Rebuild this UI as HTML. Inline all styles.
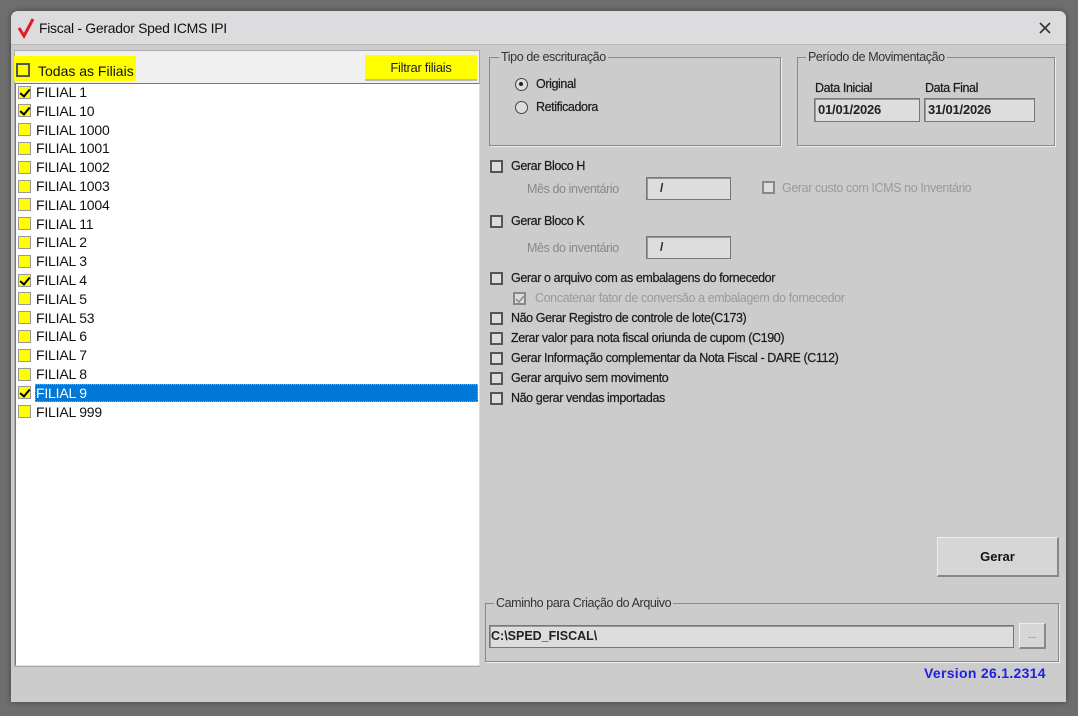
<!DOCTYPE html>
<html><head><meta charset="utf-8"><style>
*{box-sizing:border-box;margin:0;padding:0}
body{width:1078px;height:716px;background:#6e6e6e;position:relative;overflow:hidden;font-family:"Liberation Sans",sans-serif;font-size:12px;color:#222}
.a{position:absolute}
#win{left:11px;top:11px;width:1055px;height:691px;background:#cccccc;border-radius:7px 7px 0 0;box-shadow:0 0 6px rgba(0,0,0,.4)}
#title{left:0;top:0;width:1055px;height:34px;background:#dcdcdf;border-radius:7px 7px 0 0;border-bottom:1px solid #b8b8b8}
.cb{position:absolute;width:13px;height:13px;border:2px solid #555;background:#ddd}
.ycb{position:absolute;width:13px;height:13px;border:1px solid #999;background:#ffff00}
.ycb.c::after{content:"";position:absolute;left:3px;top:0px;width:4px;height:8px;border:solid #000;border-width:0 2.5px 2.5px 0;transform:rotate(40deg)}
.it{position:absolute;left:36px;font-size:14px;color:#111;letter-spacing:-.2px}
.gb{position:absolute;border:1px solid #888;box-shadow:1px 1px 0 #eee}
.lg{position:absolute;background:#cccccc;padding:0 2px;color:#333;font-size:12.5px;letter-spacing:-.4px}
.tx{letter-spacing:-.4px;font-size:12.5px;color:#1a1a1a;-webkit-text-stroke:.2px #1a1a1a}
.inp{position:absolute;background:#ddd;border:1px solid #777;box-shadow:inset 1px 1px 0 #999}
.gray{color:#9a9a9a;-webkit-text-stroke:0}
</style></head><body>
<div id="win" class="a">
 <div id="title" class="a">
  <svg class="a" style="left:6px;top:6px" width="18" height="22" viewBox="0 0 18 22"><path d="M2 11 L7 19 L16 2" stroke="#e21b24" stroke-width="3" fill="none"/></svg>
  <div class="a" style="left:28px;top:9px;font-size:14px;color:#111;letter-spacing:-.3px">Fiscal - Gerador Sped ICMS IPI</div>
  <svg class="a" style="left:1027px;top:10px" width="14" height="14" viewBox="0 0 14 14"><path d="M2 2L12 12M12 2L2 12" stroke="#333" stroke-width="1.6"/></svg>
 </div>
</div>
<div class="a" style="left:14px;top:50px;width:466px;height:617px;background:#f0f0f0;border:1px solid #aaa"></div>
<div class="a" style="left:14px;top:56px;width:122px;height:25px;background:#ffff00"></div>
<div class="a" style="left:16px;top:63px;width:14px;height:14px;border:2px solid #555;background:#ffff00"></div>
<div class="a" style="left:38px;top:63px;font-size:14px;color:#111">Todas as Filiais</div>
<div class="a" style="left:365px;top:55px;width:112px;height:26px;background:#ffff00;border-bottom:2px solid #bbb;text-align:center;line-height:26px;font-size:13px;letter-spacing:-.3px">Filtrar filiais</div>
<div class="a" style="left:15px;top:83px;width:465px;height:583px;background:#fff;border:1px solid #777;border-right-color:#ddd;border-bottom-color:#ddd"></div>
<div class="a" style="left:35px;top:384px;width:443px;height:18px;background:#0078d7;border:1px dotted #e8903a"></div>
<div id="list"></div>
<div class="gb" style="left:489px;top:57px;width:292px;height:89px"></div>
<div class="lg" style="left:499px;top:50px">Tipo de escrituração</div>
<div class="a" style="left:515px;top:78px;width:13px;height:13px;border:1.5px solid #444;border-radius:50%;background:#ddd"><div class="a" style="left:3px;top:3px;width:4px;height:4px;background:#222;border-radius:50%"></div></div>
<div class="a tx" style="left:536px;top:77px">Original</div>
<div class="a" style="left:515px;top:101px;width:13px;height:13px;border:1.5px solid #444;border-radius:50%;background:#ddd"></div>
<div class="a tx" style="left:536px;top:100px">Retificadora</div>
<div class="gb" style="left:797px;top:57px;width:258px;height:89px"></div>
<div class="lg" style="left:806px;top:50px">Período de Movimentação</div>
<div class="a tx" style="left:815px;top:81px">Data Inicial</div>
<div class="a tx" style="left:925px;top:81px">Data Final</div>
<div class="inp" style="left:814px;top:98px;width:106px;height:24px"></div>
<div class="a" style="left:818px;top:102px;font-weight:bold;font-size:13px;letter-spacing:-.2px">01/01/2026</div>
<div class="inp" style="left:924px;top:98px;width:111px;height:24px"></div>
<div class="a" style="left:928px;top:102px;font-weight:bold;font-size:13px;letter-spacing:-.2px">31/01/2026</div>

<div class="cb" style="left:490px;top:160px"></div><div class="a tx" style="left:511px;top:159px">Gerar Bloco H</div>
<div class="a tx gray" style="left:527px;top:182px;color:#888">Mês do inventário</div>
<div class="inp" style="left:646px;top:177px;width:85px;height:23px"></div><div class="a" style="left:660px;top:181px;font-weight:bold">/</div>
<div class="cb" style="left:762px;top:181px;border-color:#888"></div><div class="a tx gray" style="left:782px;top:181px">Gerar custo com ICMS no Inventário</div>
<div class="cb" style="left:490px;top:215px"></div><div class="a tx" style="left:511px;top:214px">Gerar Bloco K</div>
<div class="a tx gray" style="left:527px;top:241px;color:#888">Mês do inventário</div>
<div class="inp" style="left:646px;top:236px;width:85px;height:23px"></div><div class="a" style="left:660px;top:240px;font-weight:bold">/</div>
<div class="cb" style="left:490px;top:272px"></div><div class="a tx" style="left:511px;top:271px">Gerar o arquivo com as embalagens do fornecedor</div>
<div class="cb" style="left:513px;top:292px;border-color:#888"><svg class="a" style="left:0;top:0" width="10" height="10"><path d="M1 5L4 8L9 2" stroke="#888" stroke-width="1.5" fill="none"/></svg></div><div class="a tx gray" style="left:535px;top:291px">Concatenar fator de conversão a embalagem do fornecedor</div>
<div class="cb" style="left:490px;top:312px"></div><div class="a tx" style="left:511px;top:311px">Não Gerar Registro de controle de lote(C173)</div>
<div class="cb" style="left:490px;top:332px"></div><div class="a tx" style="left:511px;top:331px">Zerar valor para nota fiscal oriunda de cupom (C190)</div>
<div class="cb" style="left:490px;top:352px"></div><div class="a tx" style="left:511px;top:351px">Gerar Informação complementar da Nota Fiscal - DARE (C112)</div>
<div class="cb" style="left:490px;top:372px"></div><div class="a tx" style="left:511px;top:371px">Gerar arquivo sem movimento</div>
<div class="cb" style="left:490px;top:392px"></div><div class="a tx" style="left:511px;top:391px">Não gerar vendas importadas</div>

<div class="a" style="left:937px;top:537px;width:122px;height:40px;background:#d6d6d6;border:1px solid #eee;border-right:2px solid #888;border-bottom:2px solid #888;text-align:center;line-height:37px;font-weight:bold;font-size:13px;color:#111">Gerar</div>
<div class="gb" style="left:485px;top:603px;width:574px;height:59px"></div>
<div class="lg" style="left:494px;top:596px">Caminho para Criação do Arquivo</div>
<div class="inp" style="left:489px;top:625px;width:525px;height:23px"></div>
<div class="a" style="left:491px;top:629px;font-weight:bold;font-size:12.5px">C:\SPED_FISCAL\</div>
<div class="a" style="left:1019px;top:623px;width:27px;height:26px;background:#d6d6d6;border:1px solid #eee;border-right:2px solid #888;border-bottom:2px solid #888;text-align:center;line-height:24px;color:#666;font-size:10px">...</div>
<div class="a" style="left:924px;top:665px;color:#2020e0;font-weight:bold;font-size:14px;letter-spacing:.3px">Version 26.1.2314</div>
<script>
var items=[["FILIAL 1",1],["FILIAL 10",1],["FILIAL 1000",0],["FILIAL 1001",0],["FILIAL 1002",0],["FILIAL 1003",0],["FILIAL 1004",0],["FILIAL 11",0],["FILIAL 2",0],["FILIAL 3",0],["FILIAL 4",1],["FILIAL 5",0],["FILIAL 53",0],["FILIAL 6",0],["FILIAL 7",0],["FILIAL 8",0],["FILIAL 9",1],["FILIAL 999",0]];
var h="";items.forEach(function(it,i){var y=84+i*18.8;
h+='<div class="ycb'+(it[1]?' c':'')+'" style="left:18px;top:'+(y+1.5)+'px"></div><div class="it" style="top:'+y+'px;'+(i==16?'color:#fff':'')+'">'+it[0]+'</div>';});
document.getElementById("list").innerHTML=h;
</script>
</body></html>
